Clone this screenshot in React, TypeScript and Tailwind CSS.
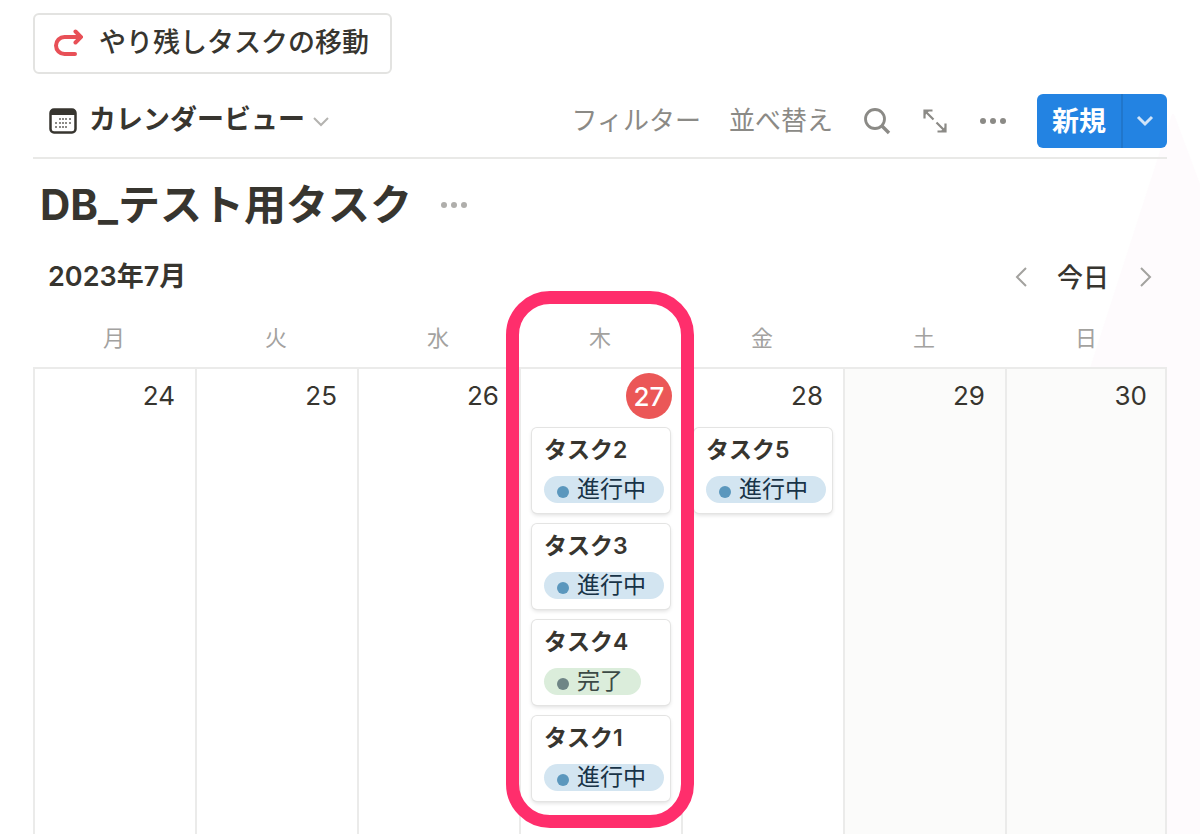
import type { ReactNode } from "react"

type Status = "progress" | "done"

interface Task {
    name: string
    status: Status
}

interface Day {
    weekday: string
    date: number
    today?: boolean
    weekend?: boolean
    tasks: Task[]
}

const days: Day[] = [
    { weekday: "月", date: 24, tasks: [] },
    { weekday: "火", date: 25, tasks: [] },
    { weekday: "水", date: 26, tasks: [] },
    {
        weekday: "木",
        date: 27,
        today: true,
        tasks: [
            { name: "タスク2", status: "progress" },
            { name: "タスク3", status: "progress" },
            { name: "タスク4", status: "done" },
            { name: "タスク1", status: "progress" },
        ],
    },
    { weekday: "金", date: 28, tasks: [{ name: "タスク5", status: "progress" }] },
    { weekday: "土", date: 29, weekend: true, tasks: [] },
    { weekday: "日", date: 30, weekend: true, tasks: [] },
]

const statuses = {
    progress: { label: "進行中", pill: "bg-[#d3e5f1] text-[#183347]", dot: "bg-[#5b97bd]" },
    done: { label: "完了", pill: "bg-[#dbeddb] text-[#3c4a45]", dot: "bg-[#6f8586]" },
}

function RedoIcon() {
    return (
        <svg width="30" height="30" viewBox="0 0 30 30" fill="none" stroke="#e85057" strokeWidth="4" strokeLinecap="round" aria-hidden="true">
            <path d="M22 25H11.500a8.500 8.500 0 0 1 0-17H27" />
            <path d="M22.500 2.500l5.500 5.500-5.500 5.500" />
        </svg>
    )
}

function CalendarIcon() {
    return (
        <svg width="28" height="26" viewBox="0 0 28 26" aria-hidden="true">
            <rect x="1.500" y="1.500" width="25" height="23" rx="3.500" fill="none" stroke="#37352f" strokeWidth="2.500" />
            <path d="M1 6V5a4 4 0 0 1 4-4h18a4 4 0 0 1 4 4v2H1z" fill="#37352f" />
            <path
                d="M10 10h2v2h-2zM13 10h2v2h-2zM16 10h2v2h-2zM20 10h2v2h-2zM6 14h2v2H6zM10 14h2v2h-2zM13 14h2v2h-2zM16 14h2v2h-2zM20 14h2v2h-2zM6 18h2v2H6zM10 18h2v2h-2zM13 18h2v2h-2zM16 18h2v2h-2z"
                fill="#8b8a86"
            />
        </svg>
    )
}

function Chevron({ d, className }: { d: string; className: string }) {
    return (
        <svg width="24" height="24" viewBox="0 0 24 24" fill="none" stroke="currentColor" className={className} aria-hidden="true">
            <path d={d} />
        </svg>
    )
}

function SearchIcon() {
    return (
        <svg width="28" height="28" viewBox="0 0 28 28" fill="none" stroke="currentColor" strokeWidth="2.800" aria-hidden="true">
            <circle cx="12" cy="12" r="9.500" />
            <path d="M18.500 18.500L26 26" strokeWidth="3.400" />
        </svg>
    )
}

function ExpandIcon() {
    return (
        <svg width="24" height="24" viewBox="0 0 24 24" fill="none" stroke="currentColor" strokeWidth="2.200" aria-hidden="true">
            <path d="M2 2l8.500 8.500M22 22l-8.500-8.500" />
            <path d="M1.500 9.500v-8h8M22.500 14.500v8h-8" />
            <path d="M1 1h6L1 7zM23 23h-6l6-6z" fill="currentColor" stroke="none" />
        </svg>
    )
}

function DotsIcon() {
    return (
        <svg width="28" height="8" viewBox="0 0 28 8" fill="currentColor" aria-hidden="true">
            <circle cx="4" cy="4" r="3" />
            <circle cx="14" cy="4" r="3" />
            <circle cx="24" cy="4" r="3" />
        </svg>
    )
}

function IconButton({ label, children, className = "" }: { label: string; children: ReactNode; className?: string }) {
    return (
        <button type="button" aria-label={label} className={`flex items-center justify-center ${className}`}>
            {children}
        </button>
    )
}

function TaskCard({ task }: { task: Task }) {
    const status = statuses[task.status]
    return (
        <li className="h-[85px] rounded-[5px] bg-white pt-2 pl-3 shadow-[0_0_0_1px_#e4e4e3,0_2px_4px_#00000024]">
            <div className="text-[23px] leading-7 font-semibold">{task.name}</div>
            <span className={`mt-3 inline-flex h-[27px] items-center gap-2 rounded-full pr-[18px] pl-[13px] text-[23px] leading-[26px] whitespace-nowrap ${status.pill}`}>
                <span className={`mt-1 size-3 shrink-0 rounded-full ${status.dot}`} />
                <span className="pb-0.5">{status.label}</span>
            </span>
        </li>
    )
}

function DayColumn({ day }: { day: Day }) {
    return (
        <section className="relative flex min-w-0 flex-1 flex-col">
            <h3 className="h-[58px] text-center text-[22px] leading-[58px] text-[#a3a29f]">{day.weekday}</h3>
            <div className={`flex-1 border-t-2 border-l-2 border-[#ebebea] px-[11px] ${day.weekend ? "bg-[#fbfbfa]" : ""}`}>
                <div className="flex h-[59px] justify-end pt-1">
                    {day.today ? (
                        <span className="-mr-0.5 flex size-[46px] items-center justify-center rounded-full bg-[#eb5757] text-[26px] font-medium text-white">
                            {day.date}
                        </span>
                    ) : (
                        <span className="pr-[9px] text-[26px] leading-[46px]">{day.date}</span>
                    )}
                </div>
                <ul className="flex flex-col gap-[11px]">
                    {day.tasks.map(task => (
                        <TaskCard key={task.name} task={task} />
                    ))}
                </ul>
            </div>
            {day.today && (
                <div className="pointer-events-none absolute -inset-x-[13px] -top-[18px] bottom-[6px] z-10 rounded-[44px] border-[13px] border-[#ff2e6c]" />
            )}
        </section>
    )
}

export default function App() {
    return (
        <main className="relative isolate flex min-h-screen flex-col bg-white px-[33px] pt-[13px] font-['Inter','Noto_Sans_CJK_JP',sans-serif] text-[#37352f]">
            <svg width="120" height="720" viewBox="0 0 120 720" className="absolute top-[114px] right-0 -z-10" aria-hidden="true">
                <path d="M92 0h2l26 70v650H87V254H10z" fill="#fefbfd" />
            </svg>

            <button type="button" className="flex h-[61px] items-center gap-4 self-start rounded-md border-2 border-[#e3e3e1] pr-[21px] pl-[18px] text-[27px] font-medium">
                <RedoIcon />
                やり残しタスクの移動
            </button>

            <div className="flex h-[85px] items-center border-b-2 border-[#e9e9e7] pt-2.5">
                <button type="button" className="ml-4 flex items-center gap-3 text-[27px] font-semibold">
                    <CalendarIcon />
                    カレンダービュー
                    <Chevron d="M5 9l7 7 7-7" className="-ml-2 stroke-2 text-[#b4b3b0]" />
                </button>
                <div className="ml-auto flex items-center text-[26px] text-[#8b8a86]">
                    <button type="button">フィルター</button>
                    <button type="button" className="ml-7">並べ替え</button>
                    <IconButton label="検索" className="ml-[30px]"><SearchIcon /></IconButton>
                    <IconButton label="全画面" className="ml-8"><ExpandIcon /></IconButton>
                    <IconButton label="その他" className="ml-8"><DotsIcon /></IconButton>
                    <div className="ml-[30px] flex h-[54px] overflow-hidden rounded-md bg-[#2383e2] text-white">
                        <button type="button" className="border-r-2 border-[#2076cb] px-[15px] pt-1 text-[27px] font-semibold">新規</button>
                        <IconButton label="新規メニュー" className="w-11">
                            <Chevron d="M5 8l7 7 7-7" className="stroke-3 text-[#d0e4f8]" />
                        </IconButton>
                    </div>
                </div>
            </div>

            <div className="flex h-[92px] items-center gap-7 pl-[7px]">
                <h1 className="text-[42px] leading-[56px] font-bold">DB_テスト用タスク</h1>
                <IconButton label="データベースメニュー" className="text-[#afaeab]"><DotsIcon /></IconButton>
            </div>

            <div className="mb-[6px] flex h-[52px] items-center pl-[15px]">
                <h2 className="text-[27px] font-semibold">2023年7月</h2>
                <div className="ml-auto flex items-center gap-6 pr-[10px] text-[#a3a29f]">
                    <IconButton label="前の週"><Chevron d="M17 3l-9 9 9 9" className="stroke-2" /></IconButton>
                    <button type="button" className="text-[26px] font-medium text-[#37352f]">今日</button>
                    <IconButton label="次の週"><Chevron d="M8 3l9 9-9 9" className="stroke-2" /></IconButton>
                </div>
            </div>

            <div className="flex flex-1 after:relative after:mt-[58px] after:-ml-0.5 after:w-0.5 after:bg-[#ebebea]">
                {days.map(day => (
                    <DayColumn key={day.date} day={day} />
                ))}
            </div>
        </main>
    )
}
